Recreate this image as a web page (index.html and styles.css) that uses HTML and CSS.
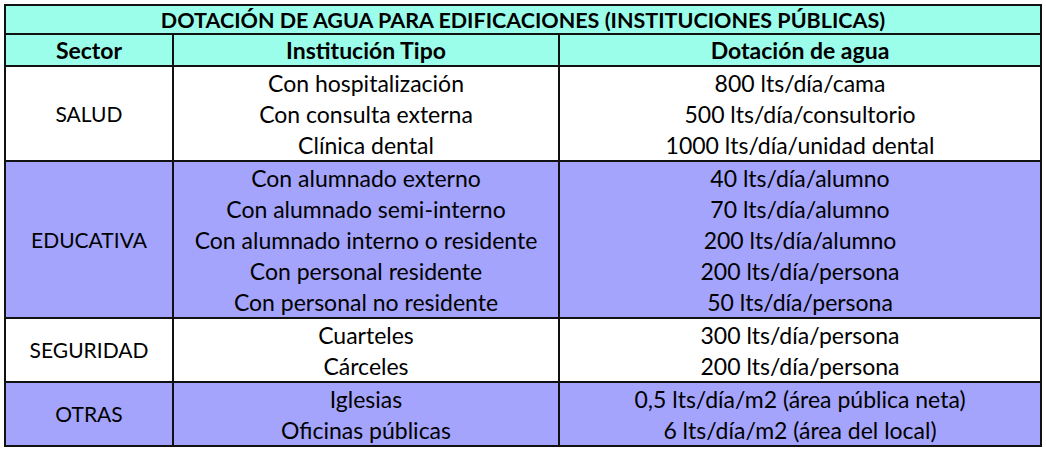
FILE: index.html
```html
<!DOCTYPE html>
<html lang="es">
<head>
<meta charset="utf-8">
<title>Dotación de agua</title>
<link rel="stylesheet" href="styles.css">
</head>
<body>
<table class="tabla">
  <colgroup>
    <col class="c-sector">
    <col class="c-inst">
    <col class="c-dot">
  </colgroup>
  <thead>
    <tr class="titulo"><th colspan="3">DOTACIÓN DE AGUA PARA EDIFICACIONES (INSTITUCIONES PÚBLICAS)</th></tr>
    <tr class="cabecera"><th>Sector</th><th>Institución Tipo</th><th>Dotación de agua</th></tr>
  </thead>
  <tbody class="grupo blanco">
    <tr><td class="sector" rowspan="3">SALUD</td><td>Con hospitalización</td><td>800 lts/día/cama</td></tr>
    <tr><td>Con consulta externa</td><td>500 lts/día/consultorio</td></tr>
    <tr><td>Clínica dental</td><td>1000 lts/día/unidad dental</td></tr>
  </tbody>
  <tbody class="grupo lila">
    <tr><td class="sector" rowspan="5">EDUCATIVA</td><td>Con alumnado externo</td><td>40 lts/día/alumno</td></tr>
    <tr><td>Con alumnado semi-interno</td><td>70 lts/día/alumno</td></tr>
    <tr><td>Con alumnado interno o residente</td><td>200 lts/día/alumno</td></tr>
    <tr><td>Con personal residente</td><td>200 lts/día/persona</td></tr>
    <tr><td>Con personal no residente</td><td>50 lts/día/persona</td></tr>
  </tbody>
  <tbody class="grupo blanco">
    <tr><td class="sector" rowspan="2">SEGURIDAD</td><td>Cuarteles</td><td>300 lts/día/persona</td></tr>
    <tr><td>Cárceles</td><td>200 lts/día/persona</td></tr>
  </tbody>
  <tbody class="grupo lila">
    <tr><td class="sector" rowspan="2">OTRAS</td><td>Iglesias</td><td>0,5 lts/día/m2 (área pública neta)</td></tr>
    <tr><td>Oficinas públicas</td><td>6 lts/día/m2 (área del local)</td></tr>
  </tbody>
</table>
</body>
</html>
```
FILE: styles.css
```css
html, body {
  margin: 0;
  background: #ffffff;
}
body {
  padding: 4px 0 0 4px;
  font-family: "Lato", "Liberation Sans", sans-serif;
  color: #000;
}
.tabla {
  border-collapse: collapse;
  width: 1036px;
  table-layout: fixed;
  font-size: 23px;
  border: 2px solid #111;
}
.c-sector { width: 168px; }
.c-inst { width: 386px; }
.c-dot { width: 482px; }
.tabla th, .tabla td {
  padding: 0;
  text-align: center;
  vertical-align: middle;
  border-left: 2px solid #111;
  border-right: 2px solid #111;
  line-height: 22px;
}
.titulo th {
  height: 27px;
  background: #9bfeeb;
  font-weight: 700;
  font-size: 21.5px;
  border-bottom: 2px solid #111;
}
.cabecera th {
  height: 30px;
  background: #9bfeeb;
  font-weight: 700;
  border-bottom: 2px solid #111;
}
.grupo td {
  height: 31px;
}
.grupo .sector {
  font-size: 21px;
}
.grupo {
  border-top: 2px solid #111;
}
.blanco { background: #ffffff; }
.lila { background: #a4a4fc; }
```
